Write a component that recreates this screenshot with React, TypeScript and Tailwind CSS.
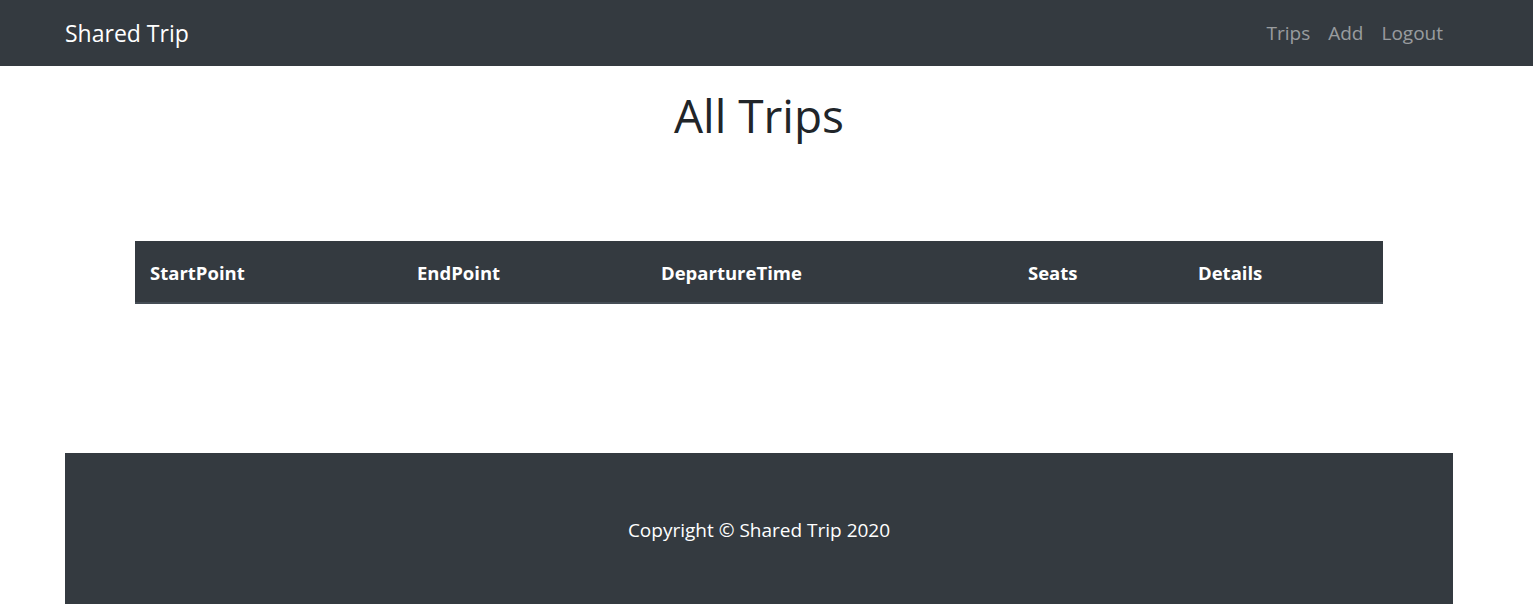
export default function App() {
  const cols = [
    ["StartPoint", "w-[270px] pl-[15px]"],
    ["EndPoint", "w-[244px] pl-3"],
    ["DepartureTime", "w-[367px] pl-3"],
    ["Seats", "w-[170px] pl-3"],
    ["Details", "w-[197px] pl-3"],
  ];

  return (
    <div className="min-h-screen bg-white text-[#212529]" style={{ fontFamily: '"Open Sans", "Noto Sans", sans-serif' }}>
      <nav className="bg-[#343a40] h-[66px]">
        <div className="w-[1518px] h-full">
          <div className="mx-auto w-[1388px] h-full flex items-center justify-between">
            <a href="#" className="text-white text-[23px] leading-[30px]">Shared Trip</a>
            <div className="flex items-center gap-[18px] text-[19px] text-white/50 pr-[10px]">
              <a href="#">Trips</a>
              <a href="#">Add</a>
              <a href="#">Logout</a>
            </div>
          </div>
        </div>
      </nav>

      <div className="w-[1518px]">
        <div className="mx-auto w-[1388px]">
          <h1 className="text-center text-[46px] font-normal leading-[1.2] pt-[22px]">All Trips</h1>

          <div className="mt-[98px] mx-[70px]">
            <table className="w-full border-collapse">
              <thead>
                <tr className="bg-[#343a40] text-white h-[62px] border-b-2 border-[#454d55]">
                  {cols.map(([label, w]) => (
                    <th key={label} className={`${w} pr-3 text-left font-bold text-[18.5px] pt-[2px]`}>{label}</th>
                  ))}
                </tr>
              </thead>
              <tbody />
            </table>
          </div>

          <footer className="mt-[149px] bg-[#343a40] text-white text-center text-[19px] leading-6 py-[65px]">
            Copyright © Shared Trip 2020
          </footer>
        </div>
      </div>
    </div>
  );
}
